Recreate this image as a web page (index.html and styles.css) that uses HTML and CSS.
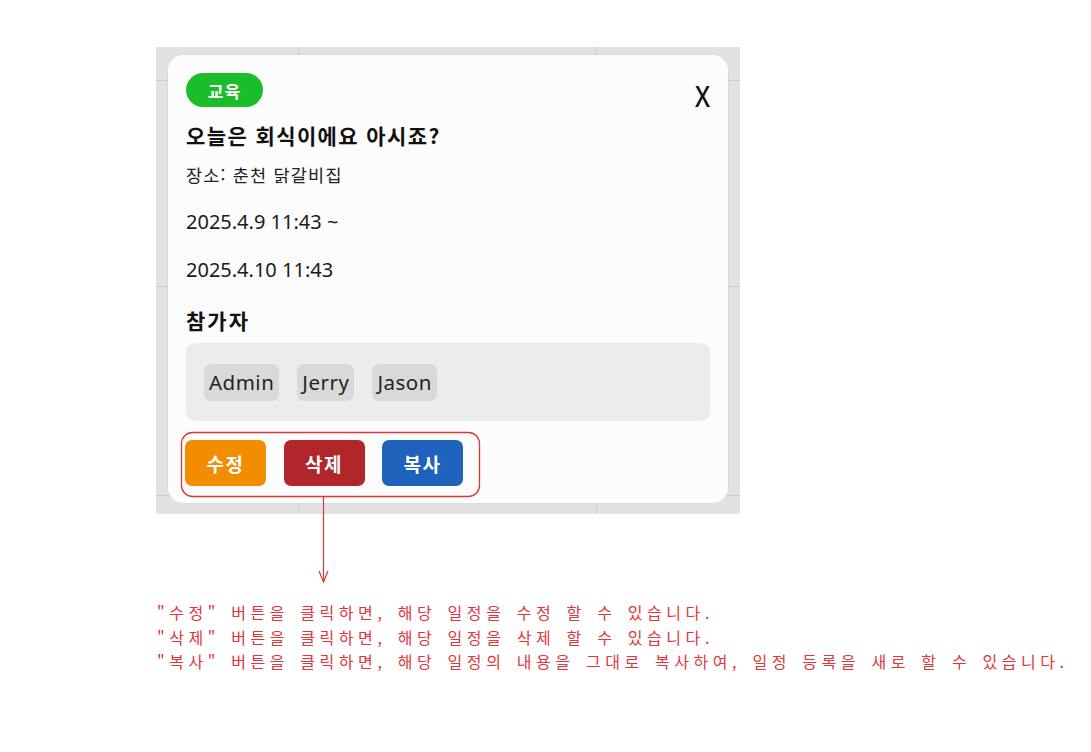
FILE: index.html
```html
<!DOCTYPE html>
<html lang="ko">
<head>
<meta charset="utf-8">
<link rel="stylesheet" href="styles.css">
</head>
<body>
<div class="stage">
  <div class="panel">
    <div class="card">
      <div class="head">
        <span class="badge">교육</span>
        <span class="close">X</span>
      </div>
      <div class="title">오늘은 회식이에요 아시죠?</div>
      <div class="place">장소: 춘천 닭갈비집</div>
      <div class="date">2025.4.9 11:43 ~</div>
      <div class="date">2025.4.10 11:43</div>
      <div class="section">참가자</div>
      <div class="people">
        <span class="chip">Admin</span>
        <span class="chip">Jerry</span>
        <span class="chip">Jason</span>
      </div>
      <div class="actions">
        <button class="btn edit">수정</button>
        <button class="btn del">삭제</button>
        <button class="btn copy">복사</button>
      </div>
    </div>
    <svg class="annot" width="340" height="150" viewBox="0 0 340 150">
      <rect x="25.5" y="0.5" width="298" height="64" rx="11" ry="11" fill="none" stroke="#e0353b" stroke-width="1.3"/>
      <line x1="167.5" y1="65" x2="167.5" y2="149" stroke="#d63a3e" stroke-width="1.2"/>
      <path d="M163 139 L167.5 150 L172 139" fill="none" stroke="#d63a3e" stroke-width="1.2"/>
    </svg>
  </div>
  <div class="notes">
    <p>"수정" 버튼을 클릭하면, 해당 일정을 수정 할 수 있습니다.</p>
    <p>"삭제" 버튼을 클릭하면, 해당 일정을 삭제 할 수 있습니다.</p>
    <p>"복사" 버튼을 클릭하면, 해당 일정의 내용을 그대로 복사하여, 일정 등록을 새로 할 수 있습니다.</p>
  </div>
</div>
</body>
</html>
```
FILE: styles.css
```css
* { box-sizing: border-box; }
html, body { margin: 0; padding: 0; background: #ffffff; }
body {
  font-family: "Noto Sans CJK KR", "Noto Sans", sans-serif;
  color: #1a1a1a;
}
.stage { padding: 47px 0 0 156px; }
.panel {
  position: relative;
  width: 584px;
  height: 467px;
  padding: 8px 12px 0 12px;
  background-color: #e2e2e2;
  background-image:
    linear-gradient(to right, transparent 142px, #cfcfcf 142px, #cfcfcf 143px, transparent 143px),
    linear-gradient(to right, transparent 440px, #cfcfcf 440px, #cfcfcf 441px, transparent 441px),
    linear-gradient(to bottom, transparent 33px, #cfcfcf 33px, #cfcfcf 34px, transparent 34px),
    linear-gradient(to bottom, transparent 239px, #cfcfcf 239px, #cfcfcf 240px, transparent 240px),
    linear-gradient(to bottom, transparent 448px, #cfcfcf 448px, #cfcfcf 449px, transparent 449px);
}
.card {
  width: 560px;
  height: 448px;
  background: #fcfcfc;
  border-radius: 15px;
  padding: 18px 18px 17px 18px;
  box-shadow: 0 0 3px rgba(0,0,0,0.06);
}
.head {
  display: flex;
  justify-content: space-between;
  align-items: flex-start;
  height: 34px;
}
.badge {
  display: inline-flex;
  align-items: center;
  justify-content: center;
  width: 77px;
  height: 34px;
  border-radius: 17px;
  background: #1cbd2b;
  color: #ffffff;
  font-size: 17px;
  letter-spacing: 1px;
  font-weight: 700;
}
.close {
  font-family: "Noto Sans", sans-serif;
  font-size: 28px;
  line-height: 28px;
  font-weight: 500;
  margin-top: 9px;
  margin-right: -1px;
  color: #111;
  transform: scaleX(0.88);
}
.title {
  margin-top: 13px;
  font-size: 21px;
  letter-spacing: 1.4px;
  font-weight: 700;
  line-height: 30px;
  color: #111;
}
.place {
  margin-top: 12px;
  font-size: 17.5px;
  letter-spacing: 1.2px;
  line-height: 26px;
  color: #222;
}
.date {
  margin-top: 20px;
  font-family: "Noto Sans", "Noto Sans CJK KR", sans-serif;
  font-size: 20px;
  line-height: 28px;
  color: #1a1a1a;
}
.section {
  margin-top: 21px;
  font-size: 21px;
  letter-spacing: 2px;
  font-weight: 700;
  line-height: 30px;
  color: #111;
}
.people {
  margin-top: 8px;
  height: 78px;
  background: #ececec;
  border-radius: 9px;
  padding: 21px 18px 0 18px;
  display: flex;
  gap: 18px;
}
.chip {
  height: 37px;
  padding: 0 5px;
  background: #d9d9d9;
  border-radius: 7px;
  font-family: "Noto Sans", sans-serif;
  font-size: 20.5px;
  letter-spacing: 0.5px;
  line-height: 37px;
  color: #1f1f2a;
}
.actions {
  margin-top: 19px;
  display: flex;
  gap: 17.5px;
  margin-left: -1px;
}
.btn {
  width: 81px;
  height: 46px;
  border: none;
  border-radius: 7px;
  color: #ffffff;
  font-family: "Noto Sans CJK KR", sans-serif;
  font-size: 19px;
  letter-spacing: 1.5px;
  font-weight: 700;
  padding: 0;
}
.btn.edit { background: #f28c00; }
.btn.del { background: #b0262a; }
.btn.copy { background: #1e62bb; }
.annot {
  position: absolute;
  left: 0px;
  top: 385px;
  overflow: visible;
}
.notes {
  margin-top: 86px;
  margin-left: 1px;
  color: #e0363c;
  font-size: 16px;
  line-height: 24.5px;
  letter-spacing: 4.55px;
  word-spacing: 2.3px;
  white-space: nowrap;
}
.notes p { margin: 0; }
```
